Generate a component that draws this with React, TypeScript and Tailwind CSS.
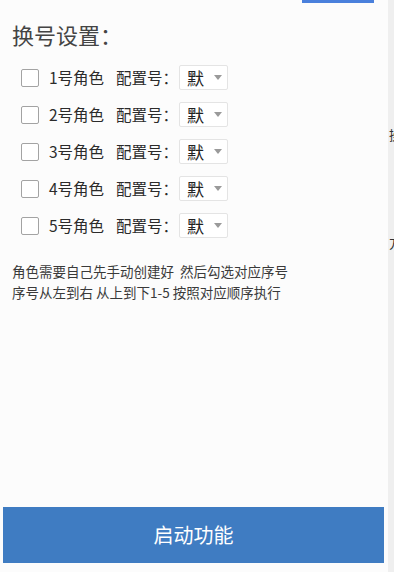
const rows = [1, 2, 3, 4, 5];

function RoleRow({ n }: { n: number }) {
  return (
    <div className="flex h-[37px] items-center">
      <span className="h-[18px] w-[18px] shrink-0 rounded-[2px] border-[1.5px] border-[#a3a3a3] bg-white" />
      <span className="ml-[10px] w-[56px] text-[15.5px] text-[#2b2b2b]">{n}号角色</span>
      <span className="ml-[11px] w-[63px] text-[15.5px] text-[#2b2b2b]">配置号：</span>
      <div className="flex h-[25px] w-[49px] items-center rounded-[2px] border border-[#e4e4e4] bg-white pl-[7px]">
        <span className="text-[17px] leading-none text-[#222]">默</span>
        <svg className="ml-auto mr-[5px]" width="8" height="5" viewBox="0 0 8 5">
          <path d="M0 0h8L4 5z" fill="#9a9a9a" />
        </svg>
      </div>
    </div>
  );
}

export default function App() {
  return (
    <div
      className="flex h-[572px] w-[394px] overflow-hidden bg-[#fcfcfc]"
      style={{ fontFamily: '"Noto Sans CJK SC", "Noto Sans", sans-serif' }}
    >
      <div className="flex flex-1 flex-col">
        <div className="flex justify-end">
          <div className="mr-[14px] h-[3px] w-[72px] bg-[#4a80dc]" />
        </div>
        <h1 className="ml-[12px] mt-[16px] text-[22px] leading-[30px] text-[#444]">换号设置：</h1>
        <div className="ml-[21px] mt-[10px] flex flex-col">
          {rows.map((n) => (
            <RoleRow key={n} n={n} />
          ))}
        </div>
        <div className="ml-[12px] mt-[17px] text-[13.5px] leading-[21px] text-[#3a3a3a]">
          <p>角色需要自己先手动创建好&nbsp; 然后勾选对应序号</p>
          <p>序号从左到右 从上到下1-5 按照对应顺序执行</p>
        </div>
        <button className="mb-[9px] ml-[3px] mr-[4px] mt-auto flex h-[56px] items-center justify-center bg-[#3f7cc2] text-[20px] text-white">
          启动功能
        </button>
      </div>
      <div className="w-[6px] shrink-0 overflow-hidden bg-[#efefef] pt-[126px] text-[13px] leading-[18px] text-[#333]">
        <div className="ml-[1px] whitespace-nowrap">操</div>
        <div className="ml-[1px] mt-[90px] whitespace-nowrap">方</div>
      </div>
    </div>
  );
}
